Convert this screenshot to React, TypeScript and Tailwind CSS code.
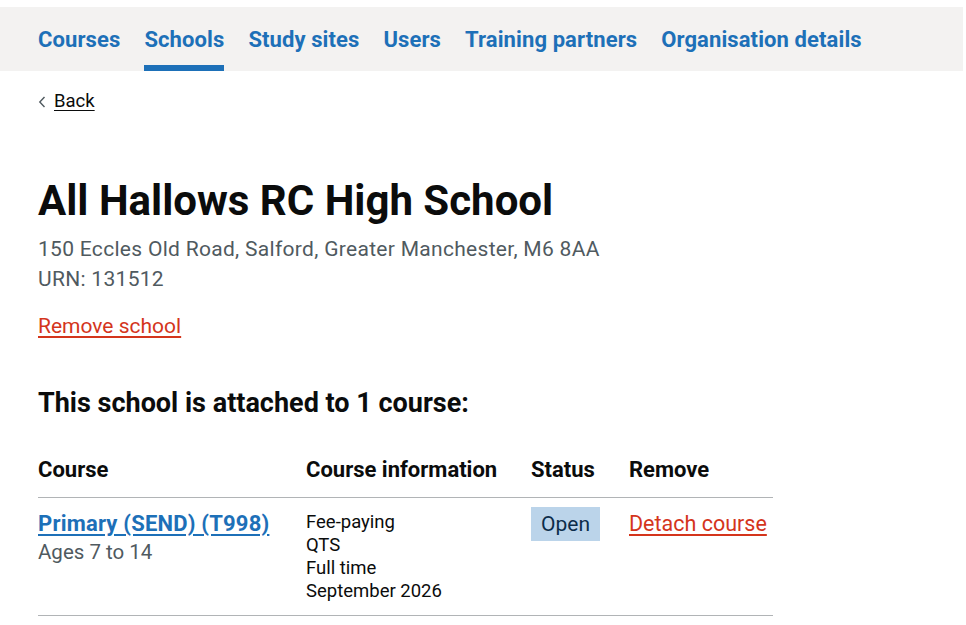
import React from 'react';

const NAV = ['Courses', 'Schools', 'Study sites', 'Users', 'Training partners', 'Organisation details'];

const App = () => {
  return (
    <div className="min-h-[625px] bg-white pt-[7px] pr-[3px] text-[#0b0c0c]" style={{ fontFamily: 'Roboto, "Liberation Sans", sans-serif' }}>
      {/* Sub navigation */}
      <nav className="h-[64px] bg-[#f3f2f1] px-[38px]">
        <ul className="flex h-full gap-[24px]">
          {NAV.map((item) => (
            <li key={item} className="relative flex h-full items-center">
              <a className="text-[22px] font-bold leading-[25px] tracking-[0.1px] text-[#1d70b8]">{item}</a>
              {item === 'Schools' && <span className="absolute bottom-0 left-0 right-0 h-[6px] bg-[#1d70b8]" />}
            </li>
          ))}
        </ul>
      </nav>

      <main className="px-[38px]">
        {/* Back */}
        <a className="mt-[20px] flex h-[20px] items-center gap-[8px] text-[18.5px] leading-[20px] text-[#0b0c0c]">
          <svg width="8" height="12" viewBox="0 0 8 12" className="mt-[1px]">
            <path d="M6.5 1L1.8 6l4.7 5" fill="none" stroke="#505a5f" strokeWidth="1.4" />
          </svg>
          <span className="underline underline-offset-[3px]">Back</span>
        </a>

        {/* Heading */}
        <h1 className="mt-[66px] text-[42px] font-bold leading-[48px]">All Hallows RC High School</h1>
        <p className="mt-[9px] text-[21px] leading-[30px] tracking-[0.3px] text-[#505a5f]">
          150 Eccles Old Road, Salford, Greater Manchester, M6 8AA
          <br />
          URN: 131512
        </p>
        <a className="mt-[17px] block text-[21px] leading-[30px] text-[#d4351c] underline underline-offset-[3px]">Remove school</a>

        <h2 className="mt-[46px] text-[27px] font-bold leading-[32px]">This school is attached to 1 course:</h2>

        {/* Table */}
        <table className="mt-[38px] w-[735px] border-collapse text-left">
          <thead>
            <tr className="border-b border-[#b1b4b6]">
              <th className="w-[268px] pb-[15px] text-[22px] font-bold leading-[25px]">Course</th>
              <th className="w-[225px] pb-[15px] text-[22px] font-bold leading-[25px]">Course information</th>
              <th className="w-[98px] pb-[15px] text-[22px] font-bold leading-[25px]">Status</th>
              <th className="pb-[15px] text-[22px] font-bold leading-[25px]">Remove</th>
            </tr>
          </thead>
          <tbody>
            <tr className="border-b border-[#b1b4b6] align-top">
              <td className="pt-[13px]">
                <a className="block text-[22px] font-bold leading-[25px] tracking-[0.2px] text-[#1d70b8] underline underline-offset-[3px]">Primary (SEND) (T998)</a>
                <p className="mt-[4px] text-[20.5px] leading-[25px] text-[#505a5f]">Ages 7 to 14</p>
              </td>
              <td className="pt-[13px] pb-[12px] text-[18.5px] leading-[23px]">
                <p>Fee-paying</p>
                <p>QTS</p>
                <p>Full time</p>
                <p>September 2026</p>
              </td>
              <td className="pt-[9px]">
                <span className="inline-block bg-[#bbd4ea] px-[10px] py-[4px] text-[21px] leading-[26px] text-[#0c2d4a]">Open</span>
              </td>
              <td className="pt-[13px]">
                <a className="block text-[21.5px] leading-[25px] text-[#d4351c] underline underline-offset-[3px]">Detach course</a>
              </td>
            </tr>
          </tbody>
        </table>
      </main>
    </div>
  );
};

export default App;
